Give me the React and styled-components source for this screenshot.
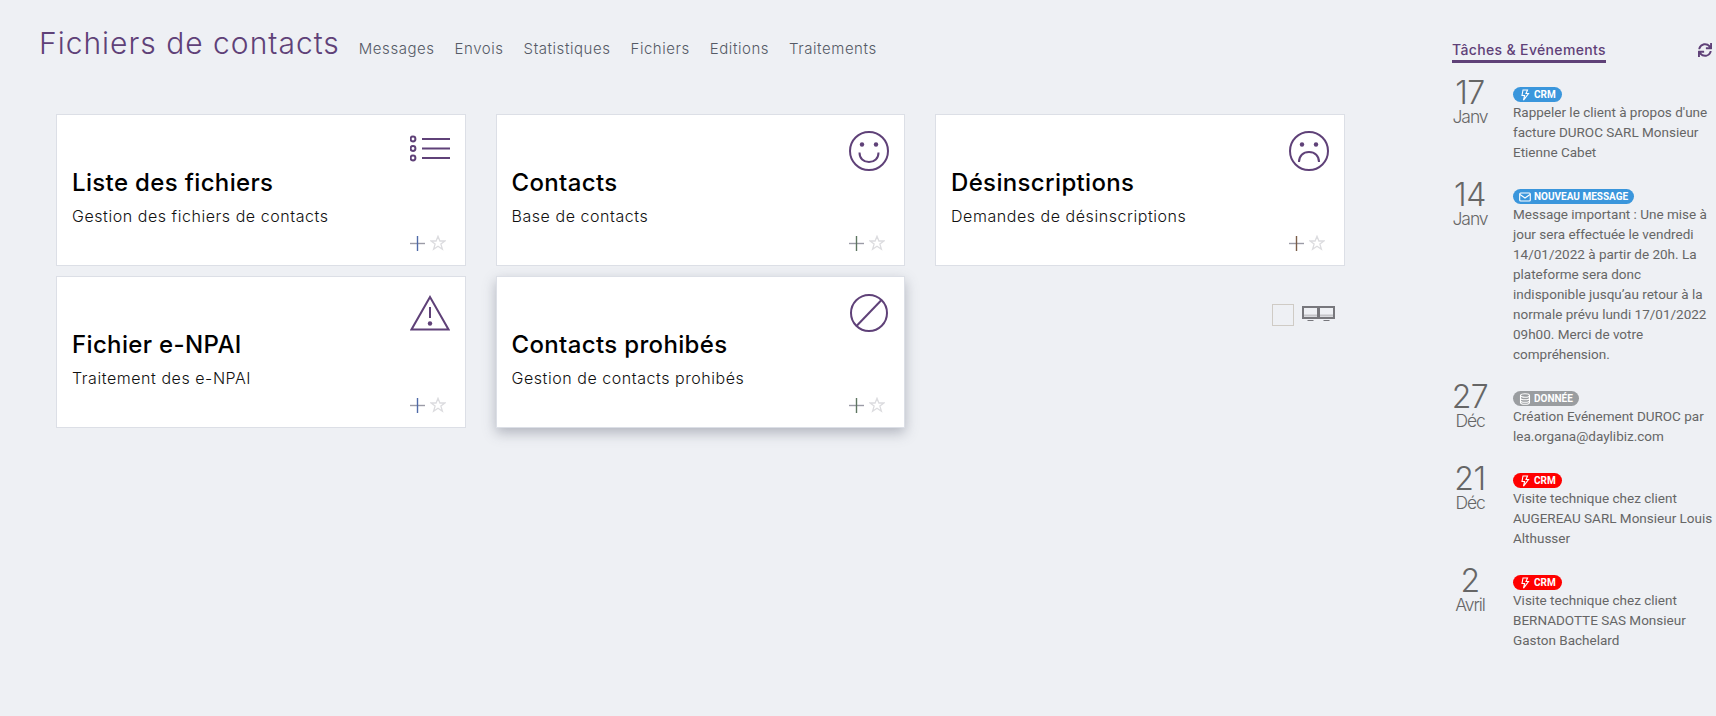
import styled, { createGlobalStyle } from "styled-components";
import { FaSync } from "react-icons/fa";

const PURPLE = "#5f4178";

const Global = createGlobalStyle`
  html, body { margin: 0; padding: 0; background: #eef0f4; }
  body { font-family: Inter, "Liberation Sans", sans-serif; }
  * { box-sizing: border-box; }
`;

const Page = styled.div`
  display: flex;
  justify-content: space-between;
  width: 1716px;
  height: 716px;
  overflow: hidden;
`;

const Main = styled.main`
  width: 1345px;
`;

const Header = styled.header`
  display: flex;
  align-items: baseline;
  gap: 19px;
  padding: 23px 0 0 39px;
  height: 114px;
`;

const PageTitle = styled.h1`
  margin: 0;
  font-size: 30px;
  line-height: 40px;
  font-weight: 300;
  letter-spacing: 1px;
  color: ${PURPLE};
`;

const Nav = styled.nav`
  display: flex;
  gap: 20px;
`;

const NavLink = styled.a`
  font-size: 15px;
  font-weight: 300;
  color: #555a66;
  letter-spacing: 0.55px;
`;

const Grid = styled.div`
  display: grid;
  grid-template-columns: repeat(3, 409.5px);
  grid-auto-rows: 152px;
  column-gap: 30px;
  row-gap: 10px;
  padding-left: 56px;
`;

const Card = styled.section`
  display: flex;
  flex-direction: column;
  background: #fff;
  border: 1px solid #dcdfe6;
  padding: 15px 15px 0 15px;
  box-shadow: ${(p) => (p.$raised ? "0 5px 12px rgba(70, 75, 95, 0.35)" : "none")};
`;

const CardIcon = styled.svg`
  align-self: flex-end;
  width: 40px;
  height: 40px;
  flex: none;
  margin-top: 1px;
  fill: none;
  stroke: ${PURPLE};
  stroke-width: 2;
`;

const CardTitle = styled.h2`
  margin: -3px 0 0;
  font-size: 24px;
  line-height: 30px;
  font-weight: 450;
  letter-spacing: 0.35px;
  color: #000;
`;

const CardText = styled.p`
  margin: 8px 0 0;
  font-size: 16px;
  line-height: 20px;
  font-weight: 300;
  letter-spacing: 0.55px;
  color: #111;
`;

const Actions = styled.div`
  display: flex;
  align-self: flex-end;
  align-items: center;
  gap: 5px;
  margin: 9px 4px 0 0;
`;

const Controls = styled.div`
  display: flex;
  justify-content: flex-end;
  align-items: center;
  gap: 8px;
  height: 22px;
  margin-top: 28px;
  padding-right: 10px;
`;

const EmptyBox = styled.div`
  width: 22px;
  height: 22px;
  border: 1px solid #cfcbc5;
`;

const Aside = styled.aside`
  width: 264px;
  padding: 40px 0 0 0;
`;

const AsideHead = styled.div`
  display: flex;
  justify-content: space-between;
  align-items: center;
  padding-right: 4px;
  margin-bottom: 24px;
`;

const AsideTitle = styled.h3`
  margin: 0;
  font-size: 14px;
  line-height: 20px;
  font-weight: 500;
  letter-spacing: 0.35px;
  color: ${PURPLE};
  border-bottom: 3px solid ${PURPLE};
`;

const Refresh = styled(FaSync)`
  width: 14px;
  height: 14px;
  margin-bottom: 4px;
  color: ${PURPLE};
`;

const Event = styled.article`
  display: flex;
  margin-bottom: 27px;
`;

const DateBlock = styled.div`
  width: 36px;
  margin-right: 25px;
  flex: none;
  display: flex;
  flex-direction: column;
  align-items: center;
  font-weight: 300;
  color: #666;
  white-space: nowrap;
`;

const Day = styled.div`
  font-size: 32px;
  line-height: 30px;
  letter-spacing: -0.4px;
  margin-top: -9px;
`;

const Month = styled.div`
  font-size: 17.5px;
  line-height: 18px;
  letter-spacing: -1.1px;
`;

const EventBody = styled.div`
  min-width: 0;
`;

const Badge = styled.span`
  display: inline-flex;
  align-items: center;
  gap: 3px;
  height: 15px;
  padding: 0 6px 0 6px;
  border-radius: 8px;
  background: ${(p) => p.$color};
  color: #fff;
  font-family: Roboto, sans-serif;
  font-size: 10px;
  font-weight: 700;
  vertical-align: top;
`;

const BadgeRow = styled.div`
  height: 15px;
`;

const BadgeIcon = styled.svg`
  width: 12px;
  height: 12px;
  fill: none;
  stroke: #fff;
  stroke-width: 1.1;
`;

const Line = styled.div`
  font-family: Roboto, "Noto Sans", sans-serif;
  font-size: 13.5px;
  line-height: 20px;
  color: #666;
  white-space: nowrap;
`;

const Bolt = () => (
  <BadgeIcon viewBox="0 0 12 12">
    <path d="M4 1h4.500L7 4.500h2.500L4.500 11.200 5.600 6.500H3z" />
  </BadgeIcon>
);

const Mail = () => (
  <BadgeIcon viewBox="0 0 12 12">
    <rect x="0.7" y="2" width="10.600" height="8" rx="1" />
    <path d="M1 3.500 6 7l5-3.500" />
  </BadgeIcon>
);

const Database = () => (
  <BadgeIcon viewBox="0 0 12 12">
    <ellipse cx="6" cy="2.500" rx="4.500" ry="1.800" />
    <path d="M1.500 2.500v7c0 1 2 1.800 4.500 1.800s4.500-.8 4.500-1.800v-7M1.500 5c0 1 2 1.800 4.500 1.800s4.500-.8 4.500-1.800M1.500 7.500c0 1 2 1.800 4.500 1.800s4.500-.8 4.500-1.800" />
  </BadgeIcon>
);

const ListIcon = () => (
  <CardIcon viewBox="0 0 40 40">
    <circle cx="3" cy="8" r="2.400" />
    <circle cx="3" cy="17.500" r="2.400" />
    <circle cx="3" cy="27" r="2.400" />
    <path d="M12 8h28M12 17.500h28M12 27h28" />
  </CardIcon>
);

const SmileIcon = () => (
  <CardIcon viewBox="0 0 40 40">
    <circle cx="20" cy="20" r="19" />
    <circle cx="13" cy="13.500" r="2.200" fill={PURPLE} stroke="none" />
    <circle cx="27" cy="13.500" r="2.200" fill={PURPLE} stroke="none" />
    <path d="M10.500 21.500c0 6 4 9.500 9.500 9.500s9.500-3.500 9.500-9.500" />
  </CardIcon>
);

const SadIcon = () => (
  <CardIcon viewBox="0 0 40 40">
    <circle cx="20" cy="20" r="19" />
    <circle cx="13" cy="13.500" r="2.200" fill={PURPLE} stroke="none" />
    <circle cx="27" cy="13.500" r="2.200" fill={PURPLE} stroke="none" />
    <path d="M10 31c0-6 4-10 10-10s10 4 10 10" />
  </CardIcon>
);

const WarningIcon = () => (
  <CardIcon viewBox="0 0 40 40">
    <path d="M20 4 1.500 36.500h37z" strokeLinejoin="miter" />
    <path d="M20 14v11" />
    <circle cx="20" cy="30.500" r="2.200" fill={PURPLE} stroke="none" />
  </CardIcon>
);

const BanIcon = () => (
  <CardIcon viewBox="0 0 40 40">
    <circle cx="20" cy="20" r="18" />
    <path d="M7.500 33 32.500 7" />
  </CardIcon>
);

const PlusIcon = ({ tint }) => (
  <svg width="15" height="15" viewBox="0 0 15 15">
    <path d="M0 7.500h15" stroke="#9b9ba6" strokeWidth="1.400" />
    <path d="M7.500 0v15" stroke={tint} strokeWidth="1.400" />
  </svg>
);

const StarIcon = () => (
  <svg width="16" height="16" viewBox="0 0 16 16" fill="none" stroke="#dcdcdf" strokeWidth="1.300">
    <path d="M8 1.300 9.900 6h5l-4 3.100 1.500 5.100L8 11.200l-4.400 3 1.500-5.100-4-3.100h5z" />
  </svg>
);

const MonitorsIcon = () => (
  <svg width="33" height="18" viewBox="0 0 33 18" fill="none">
    <path d="M2 9.500h13M18 9.500h13" stroke="#c4c4c8" strokeWidth="2" />
    <rect x="1" y="1" width="15" height="11" stroke="#77777c" strokeWidth="2" />
    <rect x="17" y="1" width="15" height="11" stroke="#77777c" strokeWidth="2" />
    <path d="M5.500 14.500h6M21.500 14.500h6" stroke="#77777c" strokeWidth="1.200" />
  </svg>
);

const cards = [
  { title: "Liste des fichiers", text: "Gestion des fichiers de contacts", Icon: ListIcon, tint: "#4f6aa8" },
  { title: "Contacts", text: "Base de contacts", Icon: SmileIcon, tint: "#5d7560" },
  { title: "Désinscriptions", text: "Demandes de désinscriptions", Icon: SadIcon, tint: "#7b5d48" },
  { title: "Fichier e-NPAI", text: "Traitement des e-NPAI", Icon: WarningIcon, tint: "#4f6aa8" },
  { title: "Contacts prohibés", text: "Gestion de contacts prohibés", Icon: BanIcon, tint: "#5d7560", raised: true },
];

const BLUE = "#3a96dc";
const RED = "#ff0000";
const GREY = "#9a9da0";

const events = [
  {
    day: "17", month: "Janv", badge: "CRM", color: BLUE, Icon: Bolt,
    lines: ["Rappeler le client à propos d'une", "facture DUROC SARL Monsieur", "Etienne Cabet"],
  },
  {
    day: "14", month: "Janv", badge: "NOUVEAU MESSAGE", color: BLUE, Icon: Mail,
    lines: [
      "Message important : Une mise à",
      "jour sera effectuée le vendredi",
      "14/01/2022 à partir de 20h. La",
      "plateforme sera donc",
      "indisponible jusqu’au retour à la",
      "normale prévu lundi 17/01/2022",
      "09h00. Merci de votre",
      "compréhension.",
    ],
  },
  {
    day: "27", month: "Déc", badge: "DONNÉE", color: GREY, Icon: Database,
    lines: ["Création Evénement DUROC par", "lea.organa@daylibiz.com"],
  },
  {
    day: "21", month: "Déc", badge: "CRM", color: RED, Icon: Bolt,
    lines: ["Visite technique chez client", "AUGEREAU SARL Monsieur Louis", "Althusser"],
  },
  {
    day: "2", month: "Avril", badge: "CRM", color: RED, Icon: Bolt,
    lines: ["Visite technique chez client", "BERNADOTTE SAS Monsieur", "Gaston Bachelard"],
  },
];

const links = ["Messages", "Envois", "Statistiques", "Fichiers", "Editions", "Traitements"];

export default function App() {
  return (
    <Page>
      <Global />
      <Main>
        <Header>
          <PageTitle>Fichiers de contacts</PageTitle>
          <Nav>
            {links.map((l) => (
              <NavLink key={l}>{l}</NavLink>
            ))}
          </Nav>
        </Header>
        <Grid>
          {cards.map(({ title, text, Icon, tint, raised }) => (
            <Card key={title} $raised={raised}>
              <Icon />
              <CardTitle>{title}</CardTitle>
              <CardText>{text}</CardText>
              <Actions>
                <PlusIcon tint={tint} />
                <StarIcon />
              </Actions>
            </Card>
          ))}
          <Controls>
            <EmptyBox />
            <MonitorsIcon />
          </Controls>
        </Grid>
      </Main>
      <Aside>
        <AsideHead>
          <AsideTitle>Tâches &amp; Evénements</AsideTitle>
          <Refresh />
        </AsideHead>
        {events.map(({ day, month, badge, color, Icon, lines }) => (
          <Event key={day + month}>
            <DateBlock>
              <Day>{day}</Day>
              <Month>{month}</Month>
            </DateBlock>
            <EventBody>
              <BadgeRow>
                <Badge $color={color}>
                  <Icon />
                  {badge}
                </Badge>
              </BadgeRow>
              {lines.map((line) => (
                <Line key={line}>{line}</Line>
              ))}
            </EventBody>
          </Event>
        ))}
      </Aside>
    </Page>
  );
}
